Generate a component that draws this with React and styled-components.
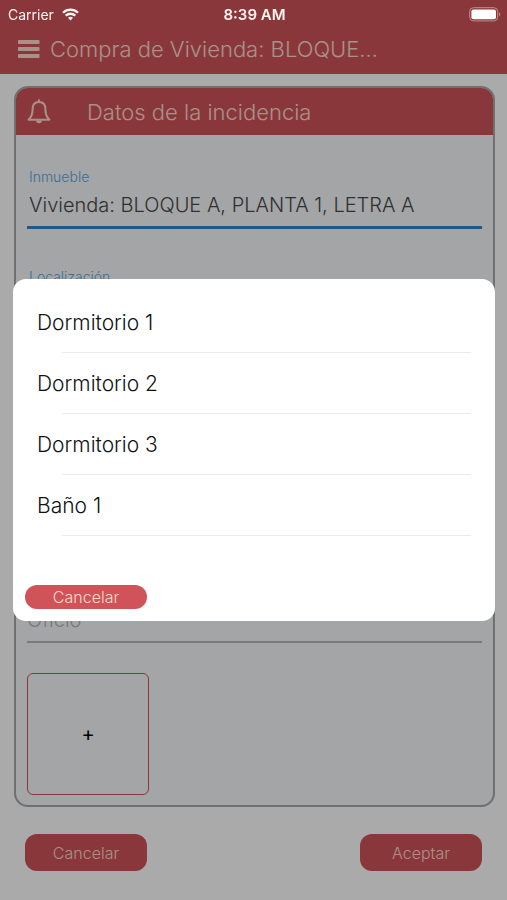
import React from "react";
import styled, { createGlobalStyle } from "styled-components";

const RED = "#d05359";
const CREAM = "#fcdccb";

const GlobalStyle = createGlobalStyle`
  *, *::before, *::after { box-sizing: border-box; }
  body {
    margin: 0;
    background: #ffffff;
    font-family: "Century Gothic", Inter, "Open Sans", sans-serif;
    font-weight: 300;
  }
  button, input { font: inherit; color: inherit; }
`;

const Screen = styled.div`
  min-height: 100vh;
  display: flex;
  flex-direction: column;
`;

const StatusBar = styled.div`
  position: relative;
  z-index: 2;
  height: 28px;
  padding: 0 6px 0 8px;
  display: grid;
  grid-template-columns: 1fr auto 1fr;
  align-items: center;
  color: #fff5f0;
  font-family: Inter, sans-serif;
  font-size: 14px;
  font-weight: 400;
`;

const Carrier = styled.div`
  display: flex;
  align-items: center;
  gap: 8px;
`;

const Clock = styled.time`
  font-size: 15px;
  font-weight: 600;
`;

const BatteryIcon = styled.svg`
  justify-self: end;
`;

const TopArea = styled.header`
  background: ${RED};
`;

const NavBar = styled.div`
  height: 46px;
  padding: 0 18px 4px;
  display: flex;
  align-items: center;
  gap: 10px;
  color: ${CREAM};
`;

const IconButton = styled.button`
  display: flex;
  padding: 0;
  border: 0;
  background: none;
`;

const PageTitle = styled.h1`
  margin: 0;
  font-size: 22px;
  line-height: 28px;
  font-weight: 300;
  white-space: nowrap;
`;

const Card = styled.section`
  flex: 1;
  margin: 12px 12px 0 14px;
  display: flex;
  flex-direction: column;
  border: 2px solid #a6a8aa;
  border-radius: 14px;
  background: #f5f8fa;
  overflow: hidden;
`;

const CardHeader = styled.div`
  height: 47px;
  padding: 0 11px;
  display: flex;
  align-items: center;
  gap: 36px;
  background: ${RED};
  color: ${CREAM};
`;

const CardTitle = styled.h2`
  margin: 0;
  font-size: 22px;
  line-height: 28px;
  font-weight: 300;
`;

const CardBody = styled.form`
  flex: 1;
  padding: 32px 11px 10px;
  display: flex;
  flex-direction: column;
`;

const Field = styled.div`
  height: 100px;
  display: flex;
  flex-direction: column;
`;

const FieldLabel = styled.label`
  padding-left: 2px;
  color: #58a6e4;
  font-size: 14px;
  line-height: 20px;
`;

const FieldInput = styled.input`
  width: 100%;
  height: 42px;
  padding: 0 2px 3px;
  border: 0;
  border-bottom: 3px solid #2f86cf;
  border-radius: 0;
  background: none;
  color: #48484a;
  font-size: 20px;
  outline: none;
`;

const PlainInput = styled(FieldInput)`
  margin-top: auto;
  padding-left: 0;
  border-bottom: 2px solid #b4b7b9;
  &::placeholder { color: #b4b7b9; opacity: 1; }
`;

const AddPhoto = styled.button`
  flex: none;
  width: 122px;
  height: 122px;
  margin-top: 30px;
  border: 1px solid ${RED};
  border-radius: 6px;
  background: none;
  color: #000000;
  font-size: 20px;
  font-weight: 400;
`;

const Footer = styled.footer`
  padding: 27px 25px 29px;
  display: flex;
  justify-content: space-between;
`;

const ActionButton = styled.button`
  width: 122px;
  height: ${({ $compact }) => ($compact ? "24px" : "37px")};
  padding: 0;
  border: 0;
  border-radius: 12px;
  background: ${RED};
  color: ${CREAM};
  font-size: 16px;
  line-height: 20px;
`;

const Backdrop = styled.div`
  position: fixed;
  inset: 0;
  z-index: 1;
  padding: 0 12px 0 13px;
  display: flex;
  align-items: center;
  background: rgba(0, 0, 0, 0.335);
`;

const Dialog = styled.div`
  flex: 1;
  padding: 13px 12px 12px;
  border-radius: 13px;
  background: #ffffff;
`;

const OptionList = styled.ul`
  margin: 0 0 49px;
  padding: 0;
  list-style: none;
`;

const Option = styled.li`
  &::after {
    content: "";
    display: block;
    height: 1px;
    margin: 0 12px 0 37px;
    background: #ebebeb;
  }
`;

const OptionButton = styled.button`
  width: 100%;
  height: 60px;
  padding: 0 12px;
  border: 0;
  background: none;
  color: #111111;
  font-size: 21px;
  text-align: left;
`;

const WifiIcon = () => (
  <svg width="17" height="13" viewBox="0 0 17 13" fill="none" stroke="currentColor" strokeWidth="2.3" aria-hidden="true">
    <path d="M1 4.7C5.200 .6 11.800 .6 16 4.700" />
    <path d="M3.700 7.600C6.400 5.100 10.600 5.100 13.300 7.600" />
    <path d="M6 9.700C7.400 8.400 9.600 8.400 11 9.700L8.500 12.400Z" fill="currentColor" stroke="none" />
  </svg>
);

const Battery = () => (
  <BatteryIcon width="32" height="15" viewBox="0 0 32 15" aria-hidden="true">
    <rect x=".7" y=".7" width="28" height="13.200" rx="3.800" fill="none" stroke="#c98a8a" strokeWidth="1" />
    <rect x="2.400" y="2.400" width="24.600" height="9.800" rx="2" fill="#ffffff" />
    <path d="M30 5.200C31.600 5.800 31.600 8.800 30 9.400Z" fill="#c98a8a" />
  </BatteryIcon>
);

const MenuIcon = () => (
  <svg width="22" height="20" viewBox="0 0 22 20" fill={CREAM} aria-hidden="true">
    <rect x="0" y="1" width="21.500" height="4" rx=".8" />
    <rect x="0" y="8" width="21.500" height="4" rx=".8" />
    <rect x="0" y="15" width="21.500" height="4" rx=".8" />
  </svg>
);

const BellIcon = () => (
  <svg width="24" height="26" viewBox="0 0 24 26" fill="none" stroke={CREAM} strokeWidth="2" strokeLinejoin="round" aria-hidden="true">
    <path d="M12 .5V3M12 3C7.600 3 5.600 6.200 5.600 10.400C5.600 15.500 4.200 18 1.600 20.800H22.400C19.800 18 18.400 15.500 18.400 10.400C18.400 6.200 16.400 3 12 3Z" />
    <path d="M8.800 21.500A3.300 3.700 0 0 0 15.200 21.500Z" fill={CREAM} stroke="none" />
  </svg>
);

const ROOMS = ["Dormitorio 1", "Dormitorio 2", "Dormitorio 3", "Baño 1"];

export default function App() {
  return (
    <>
      <GlobalStyle />
      <Screen>
        <TopArea>
          <StatusBar>
            <Carrier>
              Carrier
              <WifiIcon />
            </Carrier>
            <Clock>8:39 AM</Clock>
            <Battery />
          </StatusBar>
          <NavBar>
            <IconButton type="button" aria-label="Menú">
              <MenuIcon />
            </IconButton>
            <PageTitle>Compra de Vivienda: BLOQUE…</PageTitle>
          </NavBar>
        </TopArea>
        <Card>
          <CardHeader>
            <BellIcon />
            <CardTitle>Datos de la incidencia</CardTitle>
          </CardHeader>
          <CardBody>
            <Field>
              <FieldLabel htmlFor="inmueble">Inmueble</FieldLabel>
              <FieldInput id="inmueble" defaultValue="Vivienda: BLOQUE A, PLANTA 1, LETRA A" />
            </Field>
            <Field>
              <FieldLabel htmlFor="localizacion">Localización</FieldLabel>
              <FieldInput id="localizacion" />
            </Field>
            <PlainInput aria-label="Oficio" placeholder="Oficio" />
            <AddPhoto type="button" aria-label="Añadir foto">+</AddPhoto>
          </CardBody>
        </Card>
        <Footer>
          <ActionButton type="button">Cancelar</ActionButton>
          <ActionButton type="button">Aceptar</ActionButton>
        </Footer>
      </Screen>
      <Backdrop>
        <Dialog role="dialog" aria-modal="true" aria-label="Localización">
          <OptionList>
            {ROOMS.map((room) => (
              <Option key={room}>
                <OptionButton type="button">{room}</OptionButton>
              </Option>
            ))}
          </OptionList>
          <ActionButton type="button" $compact>Cancelar</ActionButton>
        </Dialog>
      </Backdrop>
    </>
  );
}
